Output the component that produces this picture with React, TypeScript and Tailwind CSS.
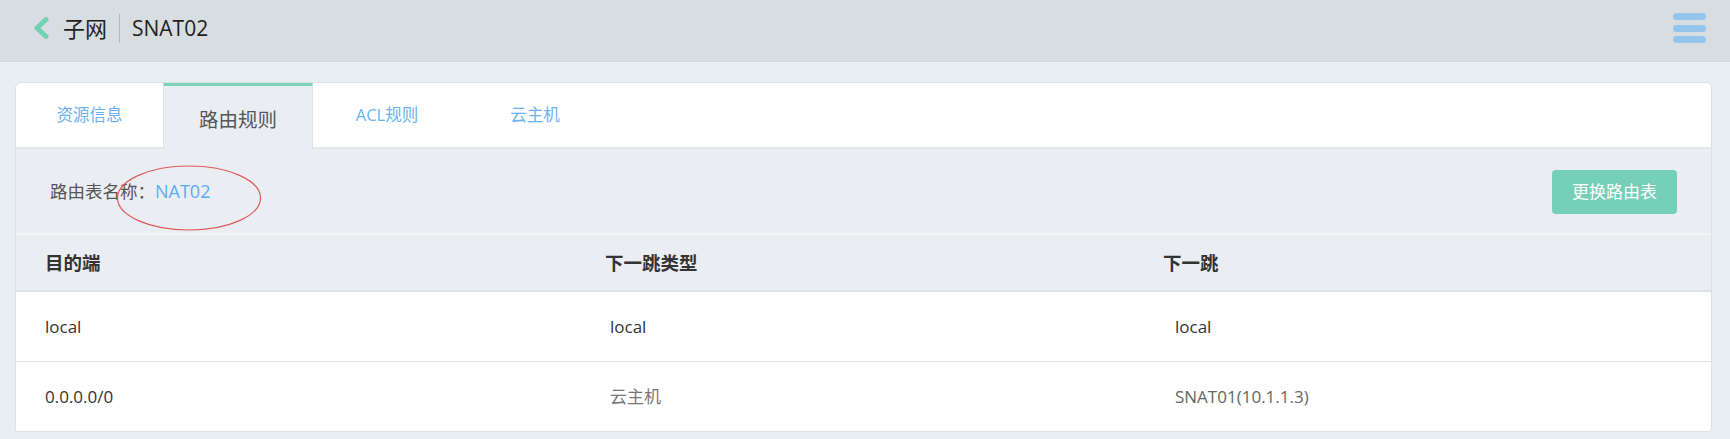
import React from "react";

const rows = [
  { dest: "local", type: "local", next: "local", typeGray: false, nextGray: false, h: "h-[70px]" },
  { dest: "0.0.0.0/0", type: "云主机", next: "SNAT01(10.1.1.3)", typeGray: true, nextGray: true, h: "h-[69px]" },
];

export default function App() {
  return (
    <div className="w-full h-[439px] bg-[#e9eef2] font-['Open_Sans','Noto_Sans_CJK_SC',sans-serif] overflow-hidden">
      {/* Top bar */}
      <div className="h-[62px] bg-[#d8dde1] border-b border-[#d2d7db] flex items-center pb-[5px] pl-[32px] pr-[24px]">
        <svg width="18" height="24" viewBox="0 0 18 24" className="shrink-0">
          <polyline points="14,3.5 5,12 14,20.5" fill="none" stroke="#72d0b3" strokeWidth="5" strokeLinecap="round" strokeLinejoin="round" />
        </svg>
        <span className="ml-[13px] text-[22px] leading-[28px] text-[#222]">子网</span>
        <span className="ml-[12px] w-px h-[29px] bg-[#b3b8bc]" />
        <span className="ml-[12px] text-[21px] leading-[28px] text-[#222]">SNAT02</span>
        <div className="ml-auto flex flex-col gap-[4.5px]">
          <span className="block w-[33px] h-[7px] rounded-full bg-[#94c5ec]" />
          <span className="block w-[33px] h-[7px] rounded-full bg-[#94c5ec]" />
          <span className="block w-[33px] h-[7px] rounded-full bg-[#94c5ec]" />
        </div>
      </div>

      {/* Card */}
      <div className="ml-[15px] mr-[18px] mt-[20px] bg-white border border-[#dde2e6] rounded-t-[6px] rounded-b-[3px] overflow-hidden">
        {/* Tabs */}
        <div className="h-[66px] flex border-b-2 border-[#e3e7ea]">
          <div className="w-[147px] flex items-center justify-center text-[16.5px] text-[#6cb2f2]">资源信息</div>
          <div className="w-[150px] -mb-[2px] bg-[#eaeef2] border-t-[3px] border-t-[#7dd3b8] border-x border-x-[#dfe3e7] flex items-center justify-center pt-[5px] text-[19.5px] text-[#555]">路由规则</div>
          <div className="w-[148px] flex items-center justify-center text-[16.5px] text-[#6cb2f2]">ACL规则</div>
          <div className="w-[148px] flex items-center justify-center text-[16.5px] text-[#6cb2f2]">云主机</div>
        </div>

        {/* Info row */}
        <div className="relative h-[86px] bg-[#eaeef2] border-b-2 border-b-[#f3f5f7] flex items-center pl-[34px] pr-[34px]">
          <span className="text-[17.5px] text-[#555]">路由表名称：</span>
          <span className="text-[18px] text-[#5aacf5]">NAT02</span>
          <button className="ml-auto w-[125px] h-[44px] rounded-[4px] bg-[#76cfb7] text-white text-[17px] flex items-center justify-center mt-[1px]">更换路由表</button>
          <svg className="absolute left-[100px] top-[15px] pointer-events-none" width="146" height="68" viewBox="0 0 146 68">
            <ellipse cx="73" cy="34" rx="71.5" ry="32" fill="none" stroke="#df5a5a" strokeWidth="1.2" />
          </svg>
        </div>

        {/* Table header */}
        <div className="h-[57px] bg-[#eaeef2] border-b-2 border-[#dde2e7] grid grid-cols-[560px_558px_1fr] items-center pl-[29px] text-[18.5px] font-bold text-[#333]">
          <div>目的端</div>
          <div>下一跳类型</div>
          <div>下一跳</div>
        </div>

        {/* Rows */}
        {rows.map((r, i) => (
          <div
            key={i}
            className={`${r.h} grid grid-cols-[565px_565px_1fr] items-center pl-[29px] text-[17px] ${i === 0 ? "border-b border-[#e1e6ea]" : ""}`}
          >
            <div className="text-[#333]">{r.dest}</div>
            <div className={r.typeGray ? "text-[#777]" : "text-[#333]"}>{r.type}</div>
            <div className={r.nextGray ? "text-[#666]" : "text-[#333]"}>{r.next}</div>
          </div>
        ))}
      </div>
    </div>
  );
}
